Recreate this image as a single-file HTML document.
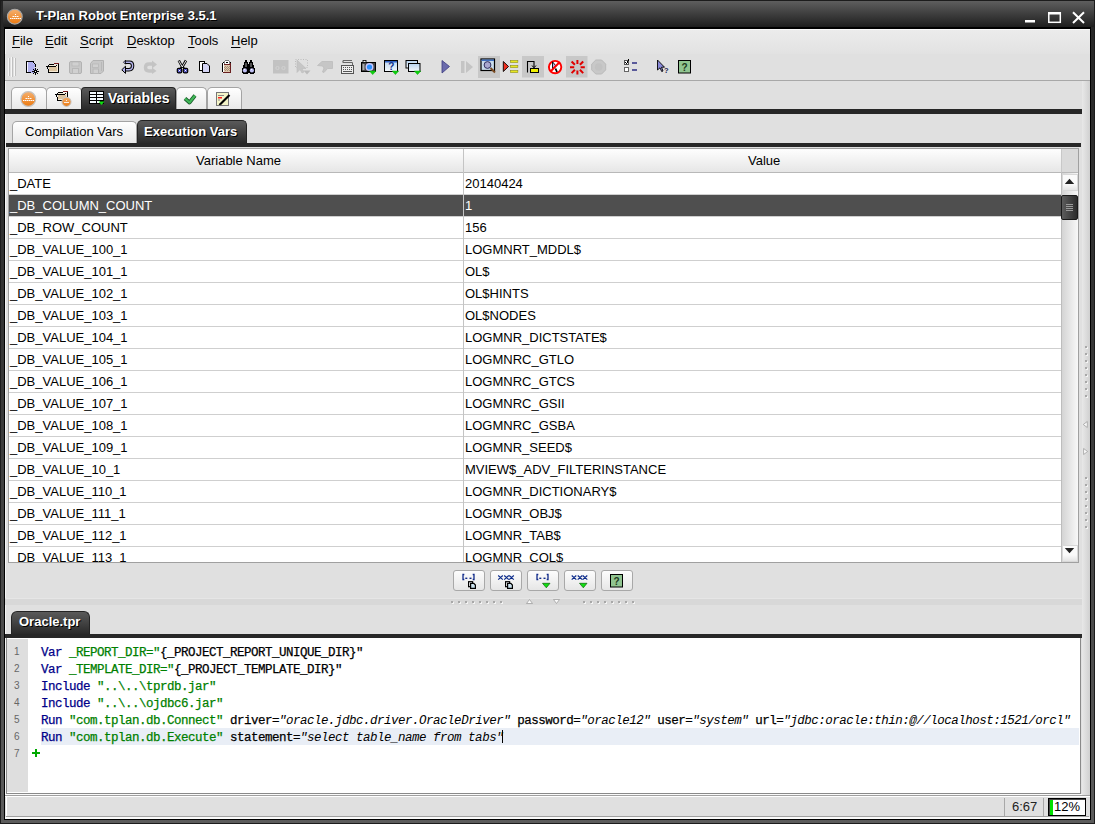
<!DOCTYPE html>
<html><head><meta charset="utf-8"><style>
*{box-sizing:border-box;margin:0;padding:0}
html,body{width:1095px;height:824px;overflow:hidden;background:#1c1c1c;font-family:"Liberation Sans",sans-serif;font-size:13px;color:#000;position:relative}
.a{position:absolute;white-space:nowrap}
#title{left:3px;top:1px;width:1091px;height:26px;background:linear-gradient(#5e5e5e,#1e1e1e)}
#ttext{left:36px;top:8px;color:#fff;font-weight:bold;font-size:13px;text-shadow:1px 1px 0 #000}
#content{left:5px;top:29px;width:1085px;height:790px;background:#e0e0e0}
#menubar{left:5px;top:29px;width:1085px;height:25px;background:linear-gradient(#ececec,#e2e2e2)}
.menu{top:33px}
.menu u{text-decoration:underline;text-decoration-thickness:1px;text-underline-offset:1.5px}
#toolbar{left:5px;top:54px;width:1085px;height:27px;background:#e0e0e0;border-bottom:1px solid #a8a8a8}
.tab{border:1px solid #a4a4a4;border-bottom:none;border-radius:5px 5px 0 0;background:linear-gradient(#ffffff,#e9e9e9)}
.tabd{border-radius:4px 4px 0 0;border:1px solid #242424;border-bottom:none;background:linear-gradient(#5a5a5a,#2a2a2a)}
.wt{color:#fff;font-weight:bold;text-shadow:1px 1px 0 #000}
.bar{background:#272727}
.row{left:0;width:1052px;height:22px;background:#fff;border-bottom:1px solid #cfcfcf}
.row.sel{background:#4f4f4f}
.rt.sel{color:#fff}
.code{position:absolute;font-family:"Liberation Mono",monospace;font-size:12.5px;letter-spacing:-0.5px;white-space:pre;left:41px;color:#000;-webkit-text-stroke:0.25px currentColor}
.kw{color:#000088}
.st{color:#008000}
.dk{color:#000}
.it{font-style:italic;-webkit-text-stroke:0}
.ln{position:absolute;left:14px;font-size:10px;color:#666}
.btn{width:32px;height:21px;border:1px solid #a8a8a8;border-radius:3px;background:linear-gradient(#fdfdfd,#e6e6e6)}

</style></head><body>
<!-- frame -->
<div class="a" style="left:1px;top:1px;width:1093px;height:822px;background:linear-gradient(#262626,#3a3a3a 50%,#5c5c5c)"></div>
<div class="a" id="title"></div>
<div class="a" style="left:4px;top:27px;width:1087px;height:793px;background:#000"></div>
<div class="a" id="ttext">T-Plan Robot Enterprise 3.5.1</div>
<div class="a" id="content"></div>
<div class="a" id="menubar"></div>
<div class="a" style="left:5px;top:29px;width:1px;height:789px;background:#f4f4f4"></div>
<div class="a" style="left:5px;top:29px;width:1085px;height:1px;background:#fafafa"></div>
<div class="a menu" style="left:12px"><u>F</u>ile</div>
<div class="a menu" style="left:45px"><u>E</u>dit</div>
<div class="a menu" style="left:80px"><u>S</u>cript</div>
<div class="a menu" style="left:127px"><u>D</u>esktop</div>
<div class="a menu" style="left:188px"><u>T</u>ools</div>
<div class="a menu" style="left:231px"><u>H</u>elp</div>
<div class="a" id="toolbar"></div>

<!-- top tabs -->
<div class="a tab" style="left:11px;top:87px;width:36px;height:22px"></div>
<div class="a tab" style="left:46px;top:87px;width:36px;height:22px"></div>
<div class="a tabd" style="left:81px;top:87px;width:95px;height:22px"></div>
<div class="a wt" style="left:108px;top:90px;font-size:14px">Variables</div>
<div class="a tab" style="left:176px;top:87px;width:31px;height:22px"></div>
<div class="a tab" style="left:207px;top:87px;width:35px;height:22px"></div>
<div class="a bar" style="left:5px;top:109px;width:1077px;height:5px"></div>

<!-- sub tabs -->
<div class="a tab" style="left:12px;top:121px;width:125px;height:22px"></div>
<div class="a" style="left:25px;top:124px">Compilation Vars</div>
<div class="a tabd" style="left:137px;top:120px;width:110px;height:23px;border-radius:5px 5px 0 0"></div>
<div class="a wt" style="left:144px;top:124px">Execution Vars</div>
<div class="a bar" style="left:6px;top:143px;width:1075px;height:4px"></div>

<!-- right strip -->
<div class="a" style="left:1082px;top:81px;width:8px;height:714px;background:linear-gradient(90deg,#e8e8e8,#d0d0d0)"></div>

<!-- table -->
<div class="a" style="left:8px;top:148px;width:1071px;height:415px;border:1px solid #a0a0a0;background:#fff;overflow:hidden">
 <div class="a" style="left:0;top:0;width:1052px;height:24px;background:linear-gradient(#fefefe,#e6e6e6);border-bottom:1px solid #b8b8b8"></div>
 <div class="a" style="left:187px;top:4px">Variable Name</div>
 <div class="a" style="left:739px;top:4px">Value</div>
 <div class="a row" style="top:24px"></div>
<div class="a rt" style="left:1px;top:27px">_DATE</div>
<div class="a rt" style="left:456px;top:27px">20140424</div>
<div class="a row sel" style="top:46px"></div>
<div class="a rt sel" style="left:1px;top:49px">_DB_COLUMN_COUNT</div>
<div class="a rt sel" style="left:456px;top:49px">1</div>
<div class="a row" style="top:68px"></div>
<div class="a rt" style="left:1px;top:71px">_DB_ROW_COUNT</div>
<div class="a rt" style="left:456px;top:71px">156</div>
<div class="a row" style="top:90px"></div>
<div class="a rt" style="left:1px;top:93px">_DB_VALUE_100_1</div>
<div class="a rt" style="left:456px;top:93px">LOGMNRT_MDDL$</div>
<div class="a row" style="top:112px"></div>
<div class="a rt" style="left:1px;top:115px">_DB_VALUE_101_1</div>
<div class="a rt" style="left:456px;top:115px">OL$</div>
<div class="a row" style="top:134px"></div>
<div class="a rt" style="left:1px;top:137px">_DB_VALUE_102_1</div>
<div class="a rt" style="left:456px;top:137px">OL$HINTS</div>
<div class="a row" style="top:156px"></div>
<div class="a rt" style="left:1px;top:159px">_DB_VALUE_103_1</div>
<div class="a rt" style="left:456px;top:159px">OL$NODES</div>
<div class="a row" style="top:178px"></div>
<div class="a rt" style="left:1px;top:181px">_DB_VALUE_104_1</div>
<div class="a rt" style="left:456px;top:181px">LOGMNR_DICTSTATE$</div>
<div class="a row" style="top:200px"></div>
<div class="a rt" style="left:1px;top:203px">_DB_VALUE_105_1</div>
<div class="a rt" style="left:456px;top:203px">LOGMNRC_GTLO</div>
<div class="a row" style="top:222px"></div>
<div class="a rt" style="left:1px;top:225px">_DB_VALUE_106_1</div>
<div class="a rt" style="left:456px;top:225px">LOGMNRC_GTCS</div>
<div class="a row" style="top:244px"></div>
<div class="a rt" style="left:1px;top:247px">_DB_VALUE_107_1</div>
<div class="a rt" style="left:456px;top:247px">LOGMNRC_GSII</div>
<div class="a row" style="top:266px"></div>
<div class="a rt" style="left:1px;top:269px">_DB_VALUE_108_1</div>
<div class="a rt" style="left:456px;top:269px">LOGMNRC_GSBA</div>
<div class="a row" style="top:288px"></div>
<div class="a rt" style="left:1px;top:291px">_DB_VALUE_109_1</div>
<div class="a rt" style="left:456px;top:291px">LOGMNR_SEED$</div>
<div class="a row" style="top:310px"></div>
<div class="a rt" style="left:1px;top:313px">_DB_VALUE_10_1</div>
<div class="a rt" style="left:456px;top:313px">MVIEW$_ADV_FILTERINSTANCE</div>
<div class="a row" style="top:332px"></div>
<div class="a rt" style="left:1px;top:335px">_DB_VALUE_110_1</div>
<div class="a rt" style="left:456px;top:335px">LOGMNR_DICTIONARY$</div>
<div class="a row" style="top:354px"></div>
<div class="a rt" style="left:1px;top:357px">_DB_VALUE_111_1</div>
<div class="a rt" style="left:456px;top:357px">LOGMNR_OBJ$</div>
<div class="a row" style="top:376px"></div>
<div class="a rt" style="left:1px;top:379px">_DB_VALUE_112_1</div>
<div class="a rt" style="left:456px;top:379px">LOGMNR_TAB$</div>
<div class="a row" style="top:398px"></div>
<div class="a rt" style="left:1px;top:401px">_DB_VALUE_113_1</div>
<div class="a rt" style="left:456px;top:401px">LOGMNR_COL$</div>
 <div class="a" style="left:454px;top:0;width:1px;height:413px;background:#c4c4c4"></div>
 <!-- scrollbar -->
 <div class="a" style="left:1052px;top:0;width:17px;height:24px;background:#dadada;border-left:1px solid #c8c8c8;border-bottom:1px solid #b8b8b8"></div>
 <div class="a" style="left:1052px;top:24px;width:17px;height:389px;background:linear-gradient(90deg,#d4d4d4,#f8f8f8);border-left:1px solid #bdbdbd"></div>
 <div class="a" style="left:1053px;top:25px;width:16px;height:17px;background:linear-gradient(#fafafa 60%,#e4e4e4);border:1px solid #d8d8d8"></div>
 <div class="a" style="left:1052px;top:46px;width:17px;height:25px;background:linear-gradient(90deg,#5c5c5c,#2c2c2c);border:1px solid #1a1a1a;border-radius:2px"></div>
 <div class="a" style="left:1053px;top:396px;width:16px;height:17px;background:linear-gradient(#fafafa 60%,#e4e4e4);border:1px solid #d8d8d8"></div>
</div>

<!-- bottom buttons -->
<div class="a btn" style="left:453px;top:570px"></div>
<div class="a btn" style="left:490px;top:570px"></div>
<div class="a btn" style="left:527px;top:570px"></div>
<div class="a btn" style="left:564px;top:570px"></div>
<div class="a btn" style="left:601px;top:570px"></div>

<!-- splitter -->
<div class="a" style="left:5px;top:598px;width:1077px;height:7px;background:#d8d8d8;border-top:1px solid #e6e6e6"></div>
<div class="a" style="left:451px;top:601px;width:2px;height:2px;background:#a8a8a8;box-shadow:1px 1px 0 #f4f4f4"></div>
<div class="a" style="left:458px;top:601px;width:2px;height:2px;background:#a8a8a8;box-shadow:1px 1px 0 #f4f4f4"></div>
<div class="a" style="left:465px;top:601px;width:2px;height:2px;background:#a8a8a8;box-shadow:1px 1px 0 #f4f4f4"></div>
<div class="a" style="left:472px;top:601px;width:2px;height:2px;background:#a8a8a8;box-shadow:1px 1px 0 #f4f4f4"></div>
<div class="a" style="left:479px;top:601px;width:2px;height:2px;background:#a8a8a8;box-shadow:1px 1px 0 #f4f4f4"></div>
<div class="a" style="left:486px;top:601px;width:2px;height:2px;background:#a8a8a8;box-shadow:1px 1px 0 #f4f4f4"></div>
<div class="a" style="left:493px;top:601px;width:2px;height:2px;background:#a8a8a8;box-shadow:1px 1px 0 #f4f4f4"></div>
<div class="a" style="left:500px;top:601px;width:2px;height:2px;background:#a8a8a8;box-shadow:1px 1px 0 #f4f4f4"></div>
<div class="a" style="left:583px;top:601px;width:2px;height:2px;background:#a8a8a8;box-shadow:1px 1px 0 #f4f4f4"></div>
<div class="a" style="left:590px;top:601px;width:2px;height:2px;background:#a8a8a8;box-shadow:1px 1px 0 #f4f4f4"></div>
<div class="a" style="left:597px;top:601px;width:2px;height:2px;background:#a8a8a8;box-shadow:1px 1px 0 #f4f4f4"></div>
<div class="a" style="left:604px;top:601px;width:2px;height:2px;background:#a8a8a8;box-shadow:1px 1px 0 #f4f4f4"></div>
<div class="a" style="left:611px;top:601px;width:2px;height:2px;background:#a8a8a8;box-shadow:1px 1px 0 #f4f4f4"></div>
<div class="a" style="left:618px;top:601px;width:2px;height:2px;background:#a8a8a8;box-shadow:1px 1px 0 #f4f4f4"></div>
<div class="a" style="left:625px;top:601px;width:2px;height:2px;background:#a8a8a8;box-shadow:1px 1px 0 #f4f4f4"></div>
<div class="a" style="left:632px;top:601px;width:2px;height:2px;background:#a8a8a8;box-shadow:1px 1px 0 #f4f4f4"></div>
<div class="a" style="left:1085px;top:346px;width:2px;height:2px;background:#a8a8a8;box-shadow:1px 1px 0 #f4f4f4"></div>
<div class="a" style="left:1085px;top:353px;width:2px;height:2px;background:#a8a8a8;box-shadow:1px 1px 0 #f4f4f4"></div>
<div class="a" style="left:1085px;top:360px;width:2px;height:2px;background:#a8a8a8;box-shadow:1px 1px 0 #f4f4f4"></div>
<div class="a" style="left:1085px;top:367px;width:2px;height:2px;background:#a8a8a8;box-shadow:1px 1px 0 #f4f4f4"></div>
<div class="a" style="left:1085px;top:374px;width:2px;height:2px;background:#a8a8a8;box-shadow:1px 1px 0 #f4f4f4"></div>
<div class="a" style="left:1085px;top:381px;width:2px;height:2px;background:#a8a8a8;box-shadow:1px 1px 0 #f4f4f4"></div>
<div class="a" style="left:1085px;top:388px;width:2px;height:2px;background:#a8a8a8;box-shadow:1px 1px 0 #f4f4f4"></div>
<div class="a" style="left:1085px;top:395px;width:2px;height:2px;background:#a8a8a8;box-shadow:1px 1px 0 #f4f4f4"></div>
<div class="a" style="left:1085px;top:477px;width:2px;height:2px;background:#a8a8a8;box-shadow:1px 1px 0 #f4f4f4"></div>
<div class="a" style="left:1085px;top:484px;width:2px;height:2px;background:#a8a8a8;box-shadow:1px 1px 0 #f4f4f4"></div>
<div class="a" style="left:1085px;top:491px;width:2px;height:2px;background:#a8a8a8;box-shadow:1px 1px 0 #f4f4f4"></div>
<div class="a" style="left:1085px;top:498px;width:2px;height:2px;background:#a8a8a8;box-shadow:1px 1px 0 #f4f4f4"></div>
<div class="a" style="left:1085px;top:505px;width:2px;height:2px;background:#a8a8a8;box-shadow:1px 1px 0 #f4f4f4"></div>
<div class="a" style="left:1085px;top:512px;width:2px;height:2px;background:#a8a8a8;box-shadow:1px 1px 0 #f4f4f4"></div>
<div class="a" style="left:1085px;top:519px;width:2px;height:2px;background:#a8a8a8;box-shadow:1px 1px 0 #f4f4f4"></div>
<div class="a" style="left:1085px;top:526px;width:2px;height:2px;background:#a8a8a8;box-shadow:1px 1px 0 #f4f4f4"></div>

<!-- bottom tab -->
<div class="a tabd" style="left:11px;top:611px;width:79px;height:23px;border-radius:6px 6px 0 0"></div>
<div class="a wt" style="left:19px;top:614px">Oracle.tpr</div>
<div class="a bar" style="left:5px;top:634px;width:1077px;height:4px"></div>

<!-- editor -->
<div class="a" style="left:6px;top:638px;width:1075px;height:156px;background:#fff;border:1px solid #8a8a8a;border-top:none"></div>
<div class="a" style="left:5px;top:794px;width:1077px;height:1px;background:#fafafa"></div>
<div class="a" style="left:7px;top:639px;width:21px;height:153px;background:#dedede"></div>
<div class="a" style="left:41px;top:728px;width:1038px;height:17px;background:#e9eef6"></div>
<div class="code" style="top:646px"><span class="kw">Var</span> <span class="st">_REPORT_DIR=&quot;</span><span class="dk">{_PROJECT_REPORT_UNIQUE_DIR}&quot;</span></div>
<div class="code" style="top:663px"><span class="kw">Var</span> <span class="st">_TEMPLATE_DIR=&quot;</span><span class="dk">{_PROJECT_TEMPLATE_DIR}&quot;</span></div>
<div class="code" style="top:680px"><span class="kw">Include</span> <span class="st">&quot;..\..\tprdb.jar&quot;</span></div>
<div class="code" style="top:697px"><span class="kw">Include</span> <span class="st">&quot;..\..\ojdbc6.jar&quot;</span></div>
<div class="code" style="top:714px"><span class="kw">Run</span> <span class="st">&quot;com.tplan.db.Connect&quot;</span> <span class="pn">driver=</span><span class="it">&quot;oracle.jdbc.driver.OracleDriver&quot;</span> <span class="pn">password=</span><span class="it">&quot;oracle12&quot;</span> <span class="pn">user=</span><span class="it">&quot;system&quot;</span> <span class="pn">url=</span><span class="it">&quot;jdbc:oracle:thin:@//localhost:1521/orcl&quot;</span></div>
<div class="code" style="top:731px"><span class="kw">Run</span> <span class="st">&quot;com.tplan.db.Execute&quot;</span> <span class="pn">statement=</span><span class="it">&quot;select table_name from tabs&quot;</span></div>
<div class="ln" style="top:646px">1</div>
<div class="ln" style="top:663px">2</div>
<div class="ln" style="top:680px">3</div>
<div class="ln" style="top:697px">4</div>
<div class="ln" style="top:714px">5</div>
<div class="ln" style="top:731px">6</div>
<div class="ln" style="top:748px">7</div>
<div class="a" style="left:32px;top:749px;width:8px;height:8px">
 <div class="a" style="left:3px;top:0;width:2px;height:8px;background:#00a800"></div>
 <div class="a" style="left:0;top:3px;width:8px;height:2px;background:#00a800"></div>
</div>
<div class="a" style="left:502px;top:730px;width:1px;height:13px;background:#000"></div>

<!-- status -->
<div class="a" style="left:5px;top:795px;width:1085px;height:24px;background:#e0e0e0;border-top:1px solid #a0a0a0;border-bottom:2px solid #fafafa"></div>
<div class="a" style="left:5px;top:796px;width:1085px;height:1px;background:#fff"></div>
<div class="a" style="left:6px;top:816px;width:1083px;height:1px;background:#a0a0a0"></div>
<div class="a" style="left:6px;top:797px;width:1px;height:19px;background:#fff"></div>
<div class="a" style="left:1004px;top:798px;width:1px;height:18px;background:#a8a8a8"></div>
<div class="a" style="left:1043px;top:798px;width:1px;height:18px;background:#a8a8a8"></div>
<div class="a" style="left:1012px;top:799px;color:#222">6:67</div>
<div class="a" style="left:1048px;top:798px;width:38px;height:18px;background:#fff;border:1px solid #000;box-shadow:inset 1px 1px 0 #444"></div>
<div class="a" style="left:1050px;top:800px;width:3px;height:15px;background:#00e000"></div>
<div class="a" style="left:1054px;top:799px;color:#000">12%</div>

<svg class="a" style="left:0;top:0" width="1095" height="824" viewBox="0 0 1095 824">
<defs>
<linearGradient id="gOr" x1="0" y1="0" x2="0" y2="1"><stop offset="0" stop-color="#f4b070"/><stop offset="1" stop-color="#ec7a10"/></linearGradient>
<linearGradient id="gScr" x1="0" y1="0" x2="0" y2="1"><stop offset="0" stop-color="#b8d4f0"/><stop offset="1" stop-color="#f4f8fc"/></linearGradient>
</defs>
<!-- toolbar grip -->
<g fill="#c0c0c0"><rect x="9" y="58" width="1" height="18"/><rect x="12" y="57" width="1" height="20"/><rect x="15" y="58" width="1" height="18"/></g>
<g fill="#f6f6f6"><rect x="8" y="58" width="1" height="18"/><rect x="11" y="57" width="1" height="20"/><rect x="14" y="58" width="1" height="18"/></g>
<!-- 1 new doc -->
<g shape-rendering="crispEdges">
<rect x="27" y="62" width="7" height="10" fill="#b0b0ee"/>
<rect x="27" y="62" width="1" height="10" fill="#f4f4ff"/>
<rect x="26" y="61" width="1" height="12" fill="#000"/>
<rect x="26" y="61" width="8" height="1" fill="#000"/>
<rect x="26" y="72" width="5" height="1" fill="#000"/>
<rect x="33" y="62" width="1" height="1" fill="#000"/>
<rect x="34" y="63" width="1" height="1" fill="#000"/>
<rect x="35" y="64" width="1" height="3" fill="#000"/>
<rect x="33" y="63" width="1" height="1" fill="#d8d8ff"/>
<rect x="34" y="64" width="1" height="3" fill="#b0b0ee"/>
<rect x="31" y="68" width="5" height="5" fill="#b0b0ee"/>
<rect x="35" y="68" width="1" height="7" fill="#000"/>
<rect x="32" y="71" width="7" height="1" fill="#000"/>
<rect x="33" y="69" width="1" height="1" fill="#000"/><rect x="34" y="70" width="1" height="1" fill="#000"/>
<rect x="37" y="69" width="1" height="1" fill="#000"/><rect x="36" y="70" width="1" height="1" fill="#000"/>
<rect x="33" y="73" width="1" height="1" fill="#000"/><rect x="34" y="72" width="1" height="1" fill="#000"/>
<rect x="37" y="73" width="1" height="1" fill="#000"/><rect x="36" y="72" width="1" height="1" fill="#000"/>
<rect x="35" y="71" width="1" height="1" fill="#fff"/>
</g>

<!-- 2 open folder -->
<g shape-rendering="crispEdges">
<rect x="49" y="65" width="9" height="7" fill="#f6ead6"/>
<rect x="49" y="67" width="8" height="4" fill="#dcc4a0"/>
<rect x="49" y="64" width="5" height="1" fill="#000"/>
<rect x="54" y="63" width="5" height="1" fill="#7a1e1e"/>
<rect x="58" y="64" width="1" height="9" fill="#000"/>
<rect x="48" y="72" width="11" height="1" fill="#000"/>
<rect x="46" y="66" width="10" height="1" fill="#000"/>
<rect x="56" y="65" width="1" height="1" fill="#000"/>
<rect x="47" y="67" width="1" height="2" fill="#000"/>
<rect x="48" y="69" width="1" height="3" fill="#000"/>
<rect x="48" y="65" width="1" height="1" fill="#000"/>
</g>

<!-- 3 save disabled -->
<rect x="69.5" y="61.5" width="12" height="12" rx="1.5" fill="#c8c8c8" stroke="#b2b2b2"/>
<rect x="72" y="62" width="7" height="4" fill="#d0d0d0" stroke="#b8b8b8" stroke-width="0.8"/>
<rect x="72.5" y="68.5" width="6" height="5" fill="#d0d0d0" stroke="#b8b8b8"/>
<!-- 4 save all disabled -->
<path d="M90.5 63.5 L93 60.5 H103.5 V71 L101 73.5 H90.5 Z" fill="#c8c8c8" stroke="#b2b2b2"/>
<rect x="92.5" y="64" width="6" height="3.5" fill="#d0d0d0" stroke="#b8b8b8" stroke-width="0.8"/>
<rect x="93" y="69" width="5.5" height="4.5" fill="#d0d0d0" stroke="#b8b8b8"/>
<path d="M101.5 62 V71" stroke="#b8b8b8"/>

<!-- 5 undo -->
<path d="M125 62.2 H129.5 Q132.6 62.2 132.6 65.8 Q132.6 69.8 129 69.8 H125" fill="none" stroke="#000" stroke-width="3.4"/>
<path d="M125 62.2 H129.5 Q132.6 62.2 132.6 65.8 Q132.6 69.8 129 69.8 H124.5" fill="none" stroke="#b4b4ec" stroke-width="1.4"/>
<path d="M121.8 69.8 L125.5 66.2 V73.4 Z" fill="#b4b4ec" stroke="#000" stroke-width="1"/>
<path d="M123.5 62.2 L125.5 60.2 V64.2 Z" fill="#b4b4ec" stroke="#000" stroke-width="0.8"/>
<!-- 6 redo disabled -->
<path d="M153 64 H149 Q145.5 64 145.5 67.5 Q145.5 71 149 71 H153" fill="none" stroke="#c4c4c4" stroke-width="3.4"/>
<path d="M152 60.5 L157 64.5 L152 68.5 Z M152 67.5 L156.5 71 L152 74 Z" fill="#c4c4c4"/>

<!-- 7 scissors -->
<path d="M178.8 60.5 L182.5 67.5 M186 60.5 L182 67.5" stroke="#000" stroke-width="2.6"/>
<path d="M178.8 60.8 L182.3 67 M186 60.8 L182.2 67" stroke="#fff" stroke-width="0.9"/>
<path d="M181.5 67 L180 69 M183 67 L184.8 69" stroke="#000" stroke-width="1.5"/>
<rect x="177.3" y="68.3" width="4.4" height="4.6" rx="1.2" fill="#4040b0" stroke="#000" stroke-width="1.2"/>
<rect x="183.3" y="68.3" width="4.4" height="4.6" rx="1.2" fill="#4040b0" stroke="#000" stroke-width="1.2"/>
<path d="M178.3 69.3 L180.7 71.9 M180.7 69.3 L178.3 71.9 M184.3 69.3 L186.7 71.9 M186.7 69.3 L184.3 71.9" stroke="#9090f0" stroke-width="0.8"/>
<rect x="179" y="70" width="1" height="1" fill="#fff"/><rect x="185" y="70" width="1" height="1" fill="#fff"/>
<!-- 8 copy -->
<rect x="199.5" y="61.5" width="5" height="9" fill="#fff" stroke="#000"/>
<path d="M202.5 63.5 H207 L209.5 66 V72.5 H202.5 Z" fill="#d4d4f4" stroke="#000"/>
<!-- 9 paste -->
<g shape-rendering="crispEdges">
<rect x="224" y="65" width="6" height="7" fill="#dcc6ac"/>
<g fill="#a89078"><rect x="225" y="66" width="1" height="1"/><rect x="227" y="66" width="1" height="1"/><rect x="229" y="66" width="1" height="1"/><rect x="224" y="67" width="1" height="1"/><rect x="226" y="67" width="1" height="1"/><rect x="228" y="67" width="1" height="1"/><rect x="225" y="68" width="1" height="1"/><rect x="227" y="68" width="1" height="1"/><rect x="229" y="68" width="1" height="1"/><rect x="224" y="69" width="1" height="1"/><rect x="226" y="69" width="1" height="1"/><rect x="228" y="69" width="1" height="1"/><rect x="225" y="70" width="1" height="1"/><rect x="227" y="70" width="1" height="1"/><rect x="229" y="70" width="1" height="1"/></g>
<rect x="222" y="63" width="1" height="9" fill="#000"/>
<rect x="223" y="63" width="1" height="9" fill="#fff"/>
<rect x="230" y="63" width="1" height="9" fill="#6a2020"/>
<rect x="224" y="64" width="6" height="1" fill="#6a2020"/>
<rect x="223" y="72" width="8" height="1" fill="#6a2020"/>
<rect x="223" y="62" width="2" height="1" fill="#000"/><rect x="229" y="62" width="2" height="1" fill="#000"/>
<rect x="225" y="60" width="4" height="1" fill="#777"/>
<rect x="225" y="61" width="4" height="3" fill="#fff"/>
<rect x="224" y="61" width="1" height="3" fill="#888"/><rect x="229" y="61" width="1" height="3" fill="#888"/>
<rect x="226" y="62" width="2" height="1" fill="#000"/>
</g>
<!-- 10 binoculars -->
<g fill="#000" shape-rendering="crispEdges"><rect x="245" y="60" width="2" height="1"/><rect x="250" y="60" width="2" height="1"/><rect x="245" y="61" width="2" height="1"/><rect x="250" y="61" width="2" height="1"/><rect x="244" y="62" width="4" height="1"/><rect x="249" y="62" width="4" height="1"/><rect x="244" y="63" width="4" height="1"/><rect x="249" y="63" width="4" height="1"/><rect x="244" y="64" width="9" height="1"/><rect x="243" y="65" width="11" height="1"/><rect x="243" y="66" width="11" height="1"/><rect x="243" y="67" width="11" height="1"/><rect x="242" y="68" width="13" height="1"/><rect x="242" y="69" width="13" height="1"/><rect x="242" y="70" width="13" height="1"/><rect x="242" y="71" width="13" height="1"/><rect x="242" y="72" width="13" height="1"/><rect x="243" y="73" width="5" height="1"/><rect x="250" y="73" width="4" height="1"/></g>
<g fill="#505050" shape-rendering="crispEdges"><rect x="245" y="63" width="2" height="4"/><rect x="250" y="63" width="2" height="4"/></g>
<circle cx="244.9" cy="70.4" r="2.1" fill="#c0c0f4"/><circle cx="251.9" cy="70.4" r="2.1" fill="#c0c0f4"/>
<rect x="244" y="69" width="1" height="1" fill="#fff"/><rect x="251" y="69" width="1" height="1" fill="#fff"/>
<!-- 11 disabled box -->
<rect x="273" y="60" width="15.5" height="13.5" fill="#c2c2c2"/>
<circle cx="277.5" cy="68" r="1.6" fill="none" stroke="#d4d4d4" stroke-width="0.8"/>
<circle cx="283.5" cy="68" r="1.6" fill="none" stroke="#d4d4d4" stroke-width="0.8"/>
<!-- 12 disabled pointer -->
<rect x="295.5" y="59.5" width="12" height="8" fill="none" stroke="#bdbdbd" stroke-dasharray="1 1.5"/>
<path d="M297 60 V72.5 L300 69.5 L302 73 L304 72 L302 68.5 L306 68.5 Z" fill="#c6c6c6" stroke="#bcbcbc" stroke-width="0.6"/>
<path d="M303.5 70.5 H310.5 L307 74.5 Z" fill="#bcbcbc"/>
<!-- 13 hand disabled -->
<path d="M317.5 65.5 L322 61.5 H332.5 V68.5 H327.5 L324 72.5 L322.5 72 L324 68 L322.5 66 Z" fill="#c6c6c6" stroke="#bcbcbc" stroke-width="0.8"/>
<!-- 14 keyboard -->
<path d="M343 62.5 V60.5 H352 M343 61.5 V62.5 H352.5 V65.5" fill="none" stroke="#666" stroke-width="1"/>
<rect x="341.5" y="65.5" width="12" height="8" fill="#eee" stroke="#555"/>
<g fill="#555"><rect x="343" y="67" width="1" height="1"/><rect x="345" y="67" width="1" height="1"/><rect x="347" y="67" width="1" height="1"/><rect x="349" y="67" width="1" height="1"/><rect x="351" y="67" width="1" height="1"/><rect x="343" y="69" width="1" height="1"/><rect x="345" y="69" width="1" height="1"/><rect x="347" y="69" width="1" height="1"/><rect x="349" y="69" width="1" height="1"/><rect x="351" y="69" width="1" height="1"/><rect x="343" y="71" width="9" height="1"/></g>
<!-- 15 camera -->
<rect x="361.5" y="62.5" width="14" height="9" fill="#444" stroke="#000"/>
<rect x="363" y="60.5" width="3" height="2" fill="#eee" stroke="#000" stroke-width="0.8"/>
<circle cx="369.5" cy="67" r="3.3" fill="#2a90ff" stroke="#c8c8ff" stroke-width="1.4"/>
<rect x="362.5" y="64" width="2" height="6" fill="#aaa"/>
<path d="M369.5 71 H376 L372.7 74.6 Z" fill="#10d010" stroke="#0a0" stroke-width="0.5"/>
<!-- 16 help screen -->
<rect x="384.5" y="60.5" width="13" height="11" fill="url(#gScr)" stroke="#000"/>
<rect x="385" y="61" width="12" height="1.5" fill="#3060c0"/>
<text x="388.3" y="70" font-family="Liberation Sans" font-weight="bold" font-size="10" fill="#10308a">?</text>
<path d="M392.2 71 H398.7 L395.4 74.6 Z" fill="#10d010" stroke="#0a0" stroke-width="0.5"/>
<!-- 17 windows -->
<rect x="406" y="60.5" width="11.5" height="7.5" fill="url(#gScr)" stroke="#000"/>
<rect x="408.5" y="63.5" width="11.5" height="8" fill="url(#gScr)" stroke="#000"/>
<path d="M414.3 71 H420.8 L417.5 74.6 Z" fill="#10d010" stroke="#0a0" stroke-width="0.5"/>

<!-- 18 play -->
<path d="M442 60.5 L449.5 66.5 L442 73 Z" fill="#6a6aac" stroke="#3c3c80" stroke-width="0.8"/>
<!-- 19 step disabled -->
<rect x="461" y="61" width="3.5" height="12" fill="#c4c4c4"/>
<path d="M466 61 L473 67 L466 73 Z" fill="#c4c4c4"/>
<!-- 20 pressed bg + screen magnifier -->
<rect x="478" y="56" width="22" height="22" fill="#c8c8c8"/>
<rect x="481" y="59" width="13.5" height="11.5" fill="#c8dcec" stroke="#000" stroke-width="1.2"/>
<rect x="481.5" y="59.5" width="12.5" height="1.5" fill="#4070c0"/>
<circle cx="487.5" cy="65" r="3.4" fill="#a8a8d0" stroke="#303060" stroke-width="1"/>
<path d="M490.5 68 L495 72.5" stroke="#7a4a20" stroke-width="2"/>
<!-- 21 red triangle list -->
<path d="M503.3 61.5 L508.5 66.5 L503.3 71.5 Z" fill="#f03020" stroke="#000" stroke-width="0.9"/>
<g fill="#e8e820" stroke="#7a7a20" stroke-width="0.5"><rect x="510.3" y="60.3" width="7.6" height="2.4"/><rect x="510.3" y="65.3" width="7.6" height="2.4"/><rect x="510.3" y="70.3" width="7.6" height="2.4"/></g>
<!-- 22 pressed bg + box -->
<rect x="522" y="56" width="22" height="21.5" fill="#c8c8c8"/>
<path d="M527.5 72.5 V61.5 H534 V67.5" fill="none" stroke="#000" stroke-width="1.1"/>
<path d="M532 65.5 L534 67.8 L536 65.5" fill="none" stroke="#000"/>
<rect x="530.5" y="68.5" width="8" height="4" fill="#f0f000" stroke="#000"/>
<!-- 23 no sign -->
<circle cx="555.1" cy="67.1" r="6.2" fill="#fff" stroke="#ff0000" stroke-width="1.9"/>
<path d="M552.5 61.8 V68.8 L556 66 Z" fill="#b8b8f0" stroke="#000" stroke-width="0.9"/>
<path d="M555.5 68.5 L557 72" stroke="#000" stroke-width="1.8"/>
<path d="M559.7 62 L550.6 71.5" stroke="#ff0000" stroke-width="1.9"/>
<!-- 24 pressed bg + spinner -->
<rect x="566" y="56" width="21.5" height="21.5" fill="#c8c8c8"/>
<g stroke="#e00000" stroke-width="2">
<path d="M577.4 60 V64 M577.4 70.6 V74.6 M570 67.3 H574.2 M580.6 67.3 H584.8 M571.6 61.5 L574.9 64.8 M579.9 69.8 L583.2 73.1 M583.2 61.5 L579.9 64.8 M574.9 69.8 L571.6 73.1"/>
</g>
<!-- 25 disabled octagon -->
<path d="M595.8 60 H601.6 L605.7 64.1 V69.9 L601.6 74 H595.8 L591.7 69.9 V64.1 Z" fill="#c8c8c8" stroke="#bababa"/>
<circle cx="598.7" cy="67" r="3.8" fill="#c2c2c2"/>
<!-- 26 checklist -->
<g shape-rendering="crispEdges">
<rect x="624" y="60" width="5" height="5" fill="#fff"/>
<rect x="624" y="60" width="5" height="1" fill="#555"/><rect x="624" y="64" width="5" height="1" fill="#555"/><rect x="624" y="60" width="1" height="5" fill="#555"/><rect x="628" y="60" width="1" height="5" fill="#555"/>
<rect x="625" y="62" width="1" height="1" fill="#000"/><rect x="626" y="63" width="1" height="1" fill="#000"/><rect x="627" y="61" width="1" height="2" fill="#000"/><rect x="628" y="59" width="1" height="2" fill="#000"/>
<rect x="624" y="67" width="5" height="5" fill="#fff"/>
<rect x="624" y="67" width="5" height="1" fill="#666"/><rect x="624" y="71" width="5" height="1" fill="#666"/><rect x="624" y="67" width="1" height="5" fill="#666"/><rect x="628" y="67" width="1" height="5" fill="#666"/>
<rect x="632" y="62" width="5" height="2" fill="#5a5a9a"/>
<rect x="632" y="69" width="5" height="2" fill="#5a5a9a"/>
</g>
<!-- 27 arrow ? -->
<path d="M657.5 60 V70 L660 67.8 L661.7 71.5 L663 71 L661.5 67.2 H664.5 Z" fill="#8888d8" stroke="#000" stroke-width="0.9"/>
<text x="664" y="72.5" font-family="Liberation Sans" font-weight="bold" font-size="7.5" fill="#202050">?</text>
<!-- 28 green help -->
<rect x="678.5" y="60.5" width="12" height="12.5" fill="#90c490" stroke="#000"/>
<text x="681.5" y="70.8" font-family="Liberation Sans" font-weight="bold" font-size="10" fill="#203a20">?</text>

<!-- tab icons -->
<circle cx="28.3" cy="99" r="7.4" fill="url(#gOr)" stroke="#c4c4c4" stroke-width="1.2"/>
<g fill="#fff" shape-rendering="crispEdges"><rect x="28" y="96" width="1" height="1"/><rect x="26" y="98" width="1" height="1"/><rect x="28" y="98" width="1" height="1"/><rect x="30" y="98" width="1" height="1"/><rect x="23" y="100" width="1" height="1"/><rect x="25" y="100" width="1" height="1"/><rect x="27" y="100" width="1" height="1"/><rect x="29" y="100" width="1" height="1"/><rect x="31" y="100" width="1" height="1"/><rect x="33" y="100" width="1" height="1"/><rect x="25" y="98" width="7" height="1" opacity="0.5"/><rect x="23" y="100" width="11" height="1" opacity="0.5"/></g>
<g transform="translate(9,28)">
<g shape-rendering="crispEdges">
<rect x="49" y="65" width="9" height="7" fill="#f6ead6"/>
<rect x="49" y="67" width="8" height="4" fill="#dcc4a0"/>
<rect x="49" y="64" width="5" height="1" fill="#000"/>
<rect x="54" y="63" width="5" height="1" fill="#7a1e1e"/>
<rect x="58" y="64" width="1" height="9" fill="#000"/>
<rect x="48" y="72" width="11" height="1" fill="#000"/>
<rect x="46" y="66" width="10" height="1" fill="#000"/>
<rect x="56" y="65" width="1" height="1" fill="#000"/>
<rect x="47" y="67" width="1" height="2" fill="#000"/>
<rect x="48" y="69" width="1" height="3" fill="#000"/>
<rect x="48" y="65" width="1" height="1" fill="#000"/>
</g>

</g>
<circle cx="66.5" cy="101.8" r="4.6" fill="url(#gOr)" stroke="#c8c8c8" stroke-width="1"/>
<g fill="#fff" opacity="0.85" shape-rendering="crispEdges"><rect x="66" y="100" width="1" height="1"/><rect x="64" y="102" width="5" height="1"/></g>
<!-- variables icon -->
<rect x="89" y="91" width="15" height="13" fill="#000"/>
<g fill="#f4faff" shape-rendering="crispEdges"><rect x="90" y="92" width="6" height="2"/><rect x="97" y="92" width="6" height="2"/><rect x="90" y="95" width="6" height="2"/><rect x="97" y="95" width="6" height="2"/><rect x="90" y="98" width="6" height="2"/><rect x="97" y="98" width="6" height="2"/><rect x="90" y="101" width="6" height="2"/><rect x="97" y="101" width="3" height="2"/></g>
<path d="M98.5 101.5 H104.5 L101.5 105 Z" fill="#10e010"/>
<!-- check -->
<path d="M185 98.5 L189.5 102.5 L195 95.5" fill="none" stroke="#1a5a2a" stroke-width="3.8" stroke-linejoin="round"/>
<path d="M185 98.5 L189.5 102.5 L195 95.5" fill="none" stroke="#40b858" stroke-width="2.2" stroke-linejoin="round"/>
<!-- note -->
<rect x="216.5" y="92.5" width="12" height="13" fill="#f4f4c8" stroke="#777"/>
<rect x="218" y="95" width="6" height="1" fill="#888"/>
<rect x="218" y="97" width="4" height="1.5" fill="#ff2020"/>
<rect x="218" y="99.5" width="2" height="1" fill="#888"/>
<path d="M220 104.5 L229.5 95" stroke="#000" stroke-width="2.2"/>
<path d="M219 105 L220.5 103.2" stroke="#000" stroke-width="1"/>


<!-- button icons -->
<path d="M464.3 574.5 H463.0 V579.5 H464.3 M472.7 574.5 H474.0 V579.5 H472.7" fill="none" stroke="#102a8a" stroke-width="1.3"/><rect x="465.3" y="577.6" width="2" height="1.4" fill="#102a8a"/><rect x="469.5" y="577.6" width="2" height="1.4" fill="#102a8a"/><path d="M498.2 575.5 L502.8 579.6 M502.8 575.5 L498.2 579.6 M504.2 575.5 L508.8 579.6 M508.8 575.5 L504.2 579.6 M509.2 575.5 L513.8 579.6 M513.8 575.5 L509.2 579.6 " stroke="#0a2a8a" stroke-width="1.15"/><rect x="468.6" y="581.7" width="4" height="5" fill="#fff" stroke="#000" stroke-width="1.2"/><path d="M470.6 583.3 H473.8 L475.4 585 V588.3 H470.6 Z" fill="#cde4f0" stroke="#000" stroke-width="1.2"/><rect x="505.6" y="581.7" width="4" height="5" fill="#fff" stroke="#000" stroke-width="1.2"/><path d="M507.6 583.3 H510.8 L512.4 585 V588.3 H507.6 Z" fill="#cde4f0" stroke="#000" stroke-width="1.2"/><path d="M538.3 574.5 H537.0 V579.5 H538.3 M546.7 574.5 H548.0 V579.5 H546.7" fill="none" stroke="#102a8a" stroke-width="1.3"/><rect x="539.3" y="577.6" width="2" height="1.4" fill="#102a8a"/><rect x="543.5" y="577.6" width="2" height="1.4" fill="#102a8a"/><path d="M571.7 575.5 L576.3 579.6 M576.3 575.5 L571.7 579.6 M577.7 575.5 L582.3 579.6 M582.3 575.5 L577.7 579.6 M582.7 575.5 L587.3 579.6 M587.3 575.5 L582.7 579.6 " stroke="#0a2a8a" stroke-width="1.15"/>
<path d="M542.5 583.3 H550 L546.3 587.8 Z" fill="#10e010" stroke="#086008" stroke-width="0.7"/>
<path d="M579.5 583.3 H587 L583.3 587.8 Z" fill="#10e010" stroke="#086008" stroke-width="0.7"/>
<rect x="610.5" y="574.5" width="12" height="12.5" fill="#90c490" stroke="#000"/>
<text x="613.5" y="584.8" font-family="Liberation Sans" font-weight="bold" font-size="10" fill="#203a20">?</text>
<!-- splitter triangles -->
<path d="M1083.3 424.5 L1087.3 421.5 V427.5 Z" fill="#fafafa" stroke="#a0a0a0" stroke-width="0.8"/>
<path d="M1087.6 451.5 L1083.6 448.5 V454.5 Z" fill="#fafafa" stroke="#a0a0a0" stroke-width="0.8"/>
<path d="M526.5 603.5 L529.5 599.5 L532.5 603.5 Z" fill="#fafafa" stroke="#a0a0a0" stroke-width="0.8"/>
<path d="M553.5 599.5 L556.5 603.5 L559.5 599.5 Z" fill="#fafafa" stroke="#a0a0a0" stroke-width="0.8"/>

<!-- window icon -->
<circle cx="14.8" cy="16.7" r="7.4" fill="url(#gOr)" stroke="#a8a8a8" stroke-width="1.1"/>
<g fill="#fff" shape-rendering="crispEdges"><rect x="15" y="14" width="1" height="1"/><rect x="13" y="16" width="1" height="1"/><rect x="15" y="16" width="1" height="1"/><rect x="17" y="16" width="1" height="1"/><rect x="10" y="18" width="1" height="1"/><rect x="12" y="18" width="1" height="1"/><rect x="14" y="18" width="1" height="1"/><rect x="16" y="18" width="1" height="1"/><rect x="18" y="18" width="1" height="1"/><rect x="20" y="18" width="1" height="1"/><rect x="12" y="16" width="7" height="1" opacity="0.5"/><rect x="10" y="18" width="11" height="1" opacity="0.5"/></g>
<!-- window buttons -->
<rect x="1025" y="20" width="10" height="2.5" fill="#fff"/>
<rect x="1048.8" y="12.8" width="11.5" height="9.5" fill="none" stroke="#fff" stroke-width="1.5"/>
<rect x="1048" y="12" width="13" height="2.5" fill="#fff"/>
<path d="M1073 12.3 L1084 23 M1084 12.3 L1073 23" stroke="#fff" stroke-width="2"/>

<!-- scrollbar arrow + thumb grip -->
<path d="M1064.8 184 L1069.5 178.8 L1074.2 184 Z" fill="#222"/>
<path d="M1064.8 548 L1069.5 553.2 L1074.2 548 Z" fill="#222"/>
<g fill="#9a9a9a"><rect x="1066" y="204" width="7" height="1"/><rect x="1066" y="206" width="7" height="1"/><rect x="1066" y="208" width="7" height="1"/><rect x="1066" y="210" width="7" height="1"/></g>

</svg>


</body></html>
